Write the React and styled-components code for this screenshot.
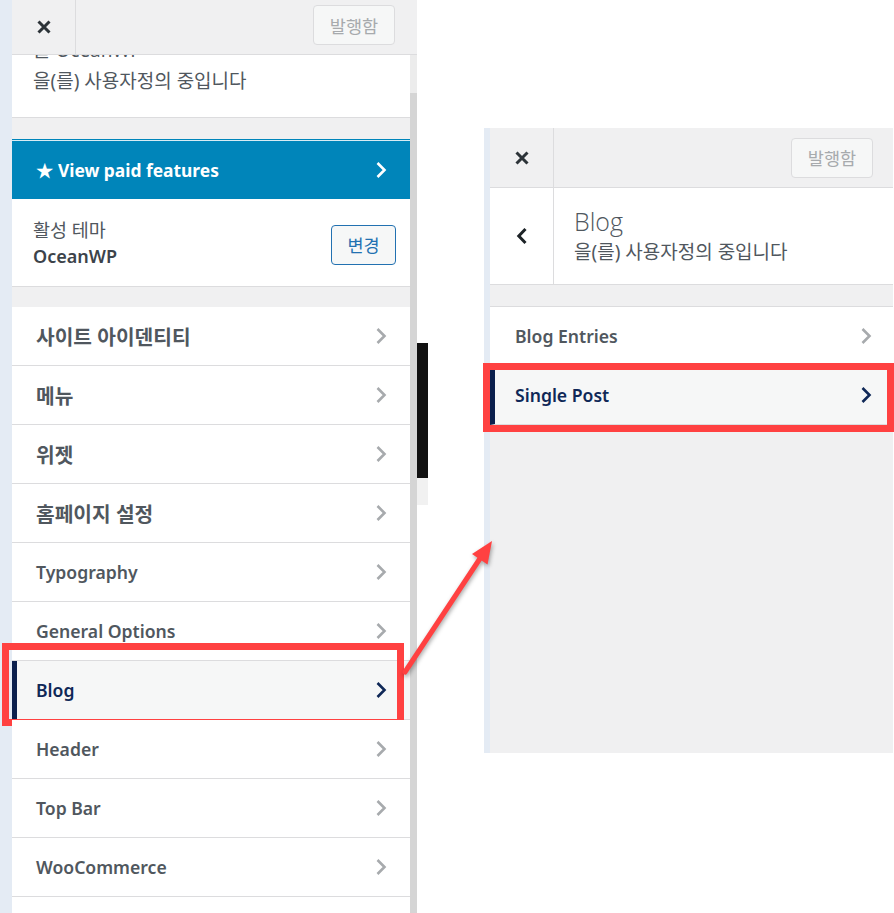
import React from "react";
import styled, { createGlobalStyle } from "styled-components";

const FONT = `"Noto Sans", "Noto Sans CJK KR", sans-serif`;

const Global = createGlobalStyle`
  html, body { margin: 0; padding: 0; background: #fff; }
  body { font-family: ${FONT}; -webkit-font-smoothing: antialiased; }
  * { box-sizing: border-box; }
  button { font-family: ${FONT}; cursor: pointer; }
`;

const Page = styled.div`
  position: relative;
  width: 894px;
  height: 913px;
  overflow: hidden;
  display: flex;
  align-items: flex-start;
  background: #fff;
`;

const LeftColumn = styled.div`
  display: flex;
  height: 913px;
  flex: none;
`;

const EdgeStrip = styled.div`
  width: ${(p) => p.$w}px;
  flex: none;
  align-self: stretch;
  background: #e4ebf4;
`;

const Sidebar = styled.div`
  width: ${(p) => p.$w}px;
  flex: none;
  display: flex;
  flex-direction: column;
  background: #f0f0f1;
`;

const Header = styled.div`
  height: ${(p) => p.$h}px;
  flex: none;
  display: flex;
  align-items: center;
  background: #f0f0f1;
  border-bottom: 1px solid #dcdcde;
  padding-right: ${(p) => p.$pr}px;
`;

const CloseButton = styled.button`
  width: 64px;
  align-self: stretch;
  border: 0;
  border-right: 1px solid #dcdcde;
  background: transparent;
  display: flex;
  align-items: center;
  justify-content: center;
  padding: 0;
`;

const PublishButton = styled.button`
  margin-left: auto;
  margin-top: ${(p) => p.$mt || 0}px;
  width: 82px;
  height: 40px;
  border: 1px solid #dcdcde;
  border-radius: 4px;
  background: #f6f7f7;
  color: #a7aaad;
  font-size: 17.5px;
  padding: 0;
`;

const SidebarBody = styled.div`
  flex: 1;
  display: flex;
  min-height: 0;
`;

const Content = styled.div`
  flex: 1;
  display: flex;
  flex-direction: column;
  background: #f0f0f1;
`;

const ScrollTrack = styled.div`
  width: 7px;
  flex: none;
  display: flex;
  flex-direction: column;
  background: #ececec;
`;

const ScrollThumb = styled.div`
  margin-top: 38px;
  flex: 1;
  background: #d5d5d5;
`;

const InfoBlock = styled.div`
  height: 63px;
  flex: none;
  background: #fff;
  border-bottom: 1px solid #dcdcde;
  overflow: hidden;
  padding-left: 21px;
  color: #50575e;
  font-size: 19px;
`;

const ClippedLine = styled.div`
  margin-top: -17px;
  height: 24px;
  line-height: 24px;
`;

const InfoSub = styled.div`
  margin-top: 7px;
  line-height: 24px;
`;

const Gap = styled.div`
  height: ${(p) => p.$h}px;
  flex: none;
`;

const Banner = styled.div`
  height: 60px;
  flex: none;
  background: #0085ba;
  border-top: 1px solid #0085ba;
  box-shadow: inset 0 1px 0 #d9ecf4;
  display: flex;
  align-items: center;
  padding: 0 23px 0 24px;
  color: #fff;
  font-size: 17.4px;
  font-weight: 700;
`;

const BannerText = styled.span`
  flex: 1;
`;

const ThemeInfo = styled.div`
  height: 88px;
  flex: none;
  background: #fff;
  border-bottom: 1px solid #dcdcde;
  display: flex;
  align-items: center;
  justify-content: space-between;
  padding: 0 14px 0 21px;
`;

const ThemeText = styled.div`
  display: flex;
  flex-direction: column;
`;

const ThemeLabel = styled.div`
  font-size: 18.5px;
  line-height: 26px;
  color: #50575e;
`;

const ThemeName = styled.div`
  font-size: 18px;
  line-height: 26px;
  font-weight: 600;
  color: #3c434a;
`;

const ChangeButton = styled.button`
  width: 65px;
  height: 40px;
  margin-top: 4px;
  border: 1px solid #2271b1;
  border-radius: 4px;
  background: #f6f7f7;
  color: #2271b1;
  font-size: 17.5px;
  padding: 0;
`;

const NavList = styled.div`
  display: flex;
  flex-direction: column;
  background: #fff;
  border-top: ${(p) => (p.$topLine ? "1px solid #dcdcde" : "none")};
`;

const NavItem = styled.div`
  position: relative;
  height: 59px;
  flex: none;
  display: flex;
  align-items: center;
  border-bottom: 1px solid #dcdcde;
  background: ${(p) => (p.$active ? "#f6f7f7" : "#fff")};
  border-left: ${(p) => (p.$active ? "5px solid #0b1f4d" : "0")};
  padding: 0 ${(p) => p.$pr}px 0 ${(p) => (p.$active ? p.$pl - 5 : p.$pl)}px;
`;

const ItemLabel = styled.span`
  flex: 1;
  font-size: ${(p) => (p.$ko ? 20.3 : 17.6)}px;
  font-weight: 600;
  color: ${(p) => (p.$active ? "#0f2857" : "#50575e")};
`;

const Highlight = styled.div`
  position: absolute;
  top: ${(p) => p.$t}px;
  left: ${(p) => p.$l}px;
  right: ${(p) => p.$r}px;
  bottom: ${(p) => p.$b}px;
  border: 7px solid #ff4141;
  pointer-events: none;
`;

const PreviewEdge = styled.div`
  width: 11px;
  flex: none;
  display: flex;
  flex-direction: column;
  padding-top: 343px;
`;

const PreviewBlock = styled.div`
  height: ${(p) => p.$h}px;
  background: ${(p) => p.$bg};
`;

const RightPanel = styled.div`
  margin-left: 56px;
  margin-top: 128px;
  width: 409px;
  height: 625px;
  flex: none;
  display: flex;
`;

const SectionHeader = styled.div`
  height: 97px;
  flex: none;
  display: flex;
  background: #fff;
  border-bottom: 1px solid #dcdcde;
`;

const BackButton = styled.button`
  width: 64px;
  flex: none;
  border: 0;
  border-right: 1px solid #dcdcde;
  background: transparent;
  display: flex;
  align-items: center;
  justify-content: center;
  padding: 0;
`;

const TitleBlock = styled.div`
  padding-left: 20px;
  display: flex;
  flex-direction: column;
  justify-content: center;
  color: #50575e;
`;

const SectionTitle = styled.div`
  font-family: "Open Sans", "Noto Sans", sans-serif;
  font-weight: 300;
  font-size: 25px;
  line-height: 32px;
  margin-top: -4px;
`;

const SectionSub = styled.div`
  font-size: 19px;
  line-height: 24px;
  margin-top: 3px;
`;

const ArrowSvg = styled.svg`
  position: absolute;
  left: 395px;
  top: 530px;
  width: 110px;
  height: 155px;
  pointer-events: none;
  filter: drop-shadow(1px 2px 2px rgba(0, 0, 0, 0.35));
`;

const XIcon = () => (
  <svg width="16" height="16" viewBox="0 0 16 16">
    <path d="M2.5 2.5 L13.5 13.5 M13.5 2.5 L2.5 13.5" stroke="#2c3338" strokeWidth="3" strokeLinecap="butt" fill="none" />
  </svg>
);

const BackIcon = () => (
  <svg width="12" height="18" viewBox="0 0 12 18">
    <path d="M9.5 2 L2.8 9 L9.5 16" stroke="#1d2327" strokeWidth="3" fill="none" />
  </svg>
);

const Chevron = ({ color }) => (
  <svg width="12" height="18" viewBox="0 0 12 18">
    <path d="M2.5 2 L9.5 9 L2.5 16" stroke={color} strokeWidth="2.6" fill="none" />
  </svg>
);

const leftItems = [
  { label: "사이트 아이덴티티", ko: true },
  { label: "메뉴", ko: true },
  { label: "위젯", ko: true },
  { label: "홈페이지 설정", ko: true },
  { label: "Typography" },
  { label: "General Options" },
  { label: "Blog", active: true },
  { label: "Header" },
  { label: "Top Bar" },
  { label: "WooCommerce" },
  { label: "" },
];

const rightItems = [
  { label: "Blog Entries" },
  { label: "Single Post", active: true },
];

export default function App() {
  return (
    <>
      <Global />
      <Page>
        <LeftColumn>
          <EdgeStrip $w={12} />
          <Sidebar $w={405}>
            <Header $h={55} $pr={22}>
              <CloseButton aria-label="닫기">
                <XIcon />
              </CloseButton>
              <PublishButton $mt={-4}>발행함</PublishButton>
            </Header>
            <SidebarBody>
              <Content>
                <InfoBlock>
                  <ClippedLine>을 OceanWP</ClippedLine>
                  <InfoSub>을(를) 사용자정의 중입니다</InfoSub>
                </InfoBlock>
                <Gap $h={21} />
                <Banner>
                  <BannerText>★ View paid features</BannerText>
                  <Chevron color="#ffffff" />
                </Banner>
                <ThemeInfo>
                  <ThemeText>
                    <ThemeLabel>활성 테마</ThemeLabel>
                    <ThemeName>OceanWP</ThemeName>
                  </ThemeText>
                  <ChangeButton>변경</ChangeButton>
                </ThemeInfo>
                <Gap $h={20} />
                <NavList>
                  {leftItems.map((it, i) => (
                    <NavItem key={i} $active={it.active} $pl={24} $pr={23}>
                      <ItemLabel $ko={it.ko} $active={it.active}>
                        {it.label}
                      </ItemLabel>
                      {it.label && <Chevron color={it.active ? "#0f2857" : "#a7aaad"} />}
                      {it.active && <Highlight $t={-18} $l={-15} $r={6} $b={-7} />}
                    </NavItem>
                  ))}
                </NavList>
              </Content>
              <ScrollTrack>
                <ScrollThumb />
              </ScrollTrack>
            </SidebarBody>
          </Sidebar>
          <PreviewEdge>
            <PreviewBlock $h={135} $bg="#111111" />
            <PreviewBlock $h={27} $bg="#f1f1f1" />
          </PreviewEdge>
        </LeftColumn>

        <RightPanel>
          <EdgeStrip $w={6} />
          <Sidebar $w={403}>
            <Header $h={60} $pr={20}>
              <CloseButton aria-label="닫기">
                <XIcon />
              </CloseButton>
              <PublishButton>발행함</PublishButton>
            </Header>
            <SectionHeader>
              <BackButton aria-label="뒤로">
                <BackIcon />
              </BackButton>
              <TitleBlock>
                <SectionTitle>Blog</SectionTitle>
                <SectionSub>을(를) 사용자정의 중입니다</SectionSub>
              </TitleBlock>
            </SectionHeader>
            <Gap $h={21} />
            <NavList $topLine>
              {rightItems.map((it, i) => (
                <NavItem key={i} $active={it.active} $pl={25} $pr={21}>
                  <ItemLabel $active={it.active}>{it.label}</ItemLabel>
                  <Chevron color={it.active ? "#0f2857" : "#a7aaad"} />
                  {it.active && <Highlight $t={-3} $l={-12} $r={-1} $b={-8} />}
                </NavItem>
              ))}
            </NavList>
          </Sidebar>
        </RightPanel>

        <ArrowSvg viewBox="395 530 110 155">
          <line x1="405" y1="672" x2="481" y2="557" stroke="#ff4141" strokeWidth="5" strokeLinecap="round" />
          <polygon points="492,541 487.5,564.5 472,554" fill="#ff4141" />
        </ArrowSvg>
      </Page>
    </>
  );
}
